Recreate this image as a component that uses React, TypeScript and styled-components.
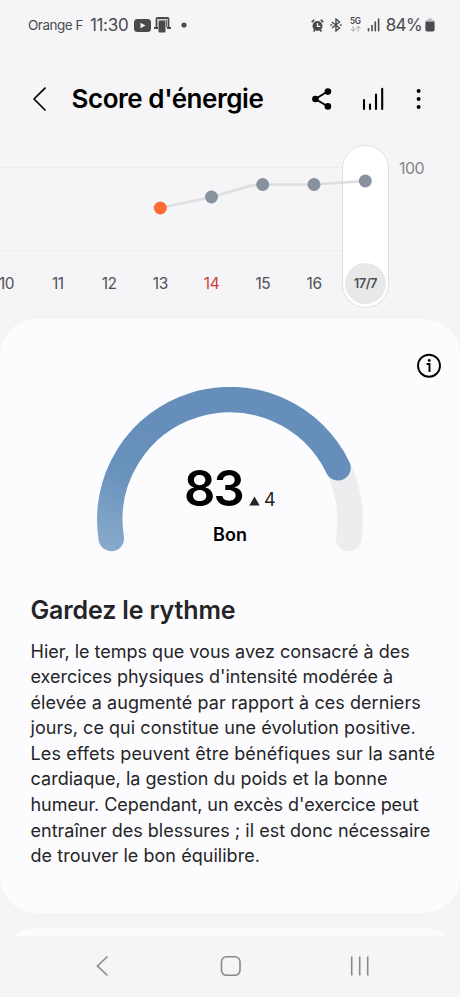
import React from "react";
import styled, { createGlobalStyle } from "styled-components";

const GlobalStyle = createGlobalStyle`
  * { box-sizing: border-box; }
  body { margin: 0; background: #f5f5f7; }
`;

const Screen = styled.div`
  width: 460px;
  height: 997px;
  display: flex;
  flex-direction: column;
  overflow: hidden;
  background: #f5f5f7;
  color: #000;
  font-family: Inter, "Liberation Sans", sans-serif;
`;

const StatusBar = styled.header`
  height: 50px;
  flex: none;
  display: flex;
  justify-content: space-between;
  align-items: center;
  padding: 0 25px 0 28px;
  color: #4b4b4e;
`;

const StatusGroup = styled.div`
  display: flex;
  align-items: center;
  height: 24px;
`;

const StatusText = styled.span<{ $size: number; $spacing: number; $gap?: number }>`
  font-size: ${(p) => p.$size}px;
  letter-spacing: ${(p) => p.$spacing}px;
  line-height: 24px;
  margin-right: ${(p) => p.$gap ?? 0}px;
  white-space: nowrap;
`;

const Icon = styled.svg<{ $gap?: number }>`
  display: block;
  flex: none;
  margin-right: ${(p) => p.$gap ?? 0}px;
`;

const TitleBar = styled.div`
  height: 90px;
  flex: none;
  display: flex;
  align-items: center;
  padding: 7px 38px 0 30px;
`;

const Title = styled.h1`
  margin: 1px auto 0 -0.5px;
  font-size: 26px;
  font-weight: 600;
  line-height: 36px;
  letter-spacing: -0.45px;
  white-space: nowrap;
`;

const ChartSection = styled.section`
  position: relative;
  height: 179px;
  flex: none;
  display: flex;
  overflow: hidden;
`;

const Days = styled.div`
  display: grid;
  grid-template-columns: repeat(8, 51.25px);
  margin-left: -19px;
  height: 100%;
  flex: none;
`;

const Day = styled.div<{ $holiday?: boolean }>`
  display: flex;
  flex-direction: column;
  align-items: center;
  padding-top: 133px;
  font-size: 15.5px;
  line-height: 21px;
  letter-spacing: -0.4px;
  color: ${(p) => (p.$holiday ? "#d23c40" : "#515154")};
`;

const SelectedDay = styled.div`
  width: 47px;
  height: 163px;
  margin: 4.5px auto 0;
  padding: 0 0 3px;
  display: flex;
  align-items: flex-end;
  justify-content: center;
  border: 1px solid #e1e1e4;
  border-radius: 24px;
  background: #fff;
`;

const SelectedLabel = styled.span`
  width: 41px;
  height: 41px;
  flex: none;
  border-radius: 50%;
  background: #e8e8ea;
  color: #515154;
  font-size: 13px;
  font-weight: 600;
  line-height: 41px;
  letter-spacing: -0.5px;
  text-align: center;
`;

const ScaleLabel = styled.span`
  margin: 17px 0 0 8px;
  font-size: 16px;
  line-height: 22px;
  letter-spacing: -0.6px;
  color: #85858a;
`;

const PlotLine = styled.svg`
  position: absolute;
  inset: 0;
  pointer-events: none;
`;

const Content = styled.main`
  height: 617px;
  flex: none;
  display: flex;
  flex-direction: column;
  gap: 14.5px;
  overflow: hidden;
`;

const Card = styled.article`
  height: 594px;
  flex: none;
  display: flex;
  flex-direction: column;
  border-radius: 36px;
  background: #fcfcfe;
`;

const InfoRow = styled.div`
  display: flex;
  justify-content: flex-end;
  padding: 34px 18px 0 0;
`;

const Gauge = styled.div`
  position: relative;
  width: 272px;
  height: 170px;
  margin: 8px auto 0;
`;

const GaugeReadout = styled.div`
  position: absolute;
  inset: 72px 0 0;
  display: flex;
  flex-direction: column;
`;

const ScoreRow = styled.div`
  display: flex;
  align-items: baseline;
  padding-left: 90px;
  height: 60px;
`;

const Score = styled.strong`
  font-size: 49px;
  line-height: 60px;
  font-weight: 600;
  letter-spacing: -1.8px;
  margin-right: 6px;
`;

const Change = styled.span`
  margin-left: 4px;
  font-size: 18px;
  color: #1e1e20;
`;

const Rating = styled.span`
  margin-top: 4px;
  text-align: center;
  font-size: 18px;
  font-weight: 600;
  line-height: 24px;
  letter-spacing: 0;
`;

const Advice = styled.div`
  padding: 35px 0 0 30.5px;
  color: #252528;
`;

const AdviceTitle = styled.h2`
  margin: 0 0 10.5px;
  font-size: 25px;
  line-height: 36px;
  font-weight: 600;
  letter-spacing: -0.15px;
`;

const AdviceText = styled.p`
  margin: 0;
  font-size: 18px;
  line-height: 25.6px;
`;

const Line = styled.span<{ $spacing: number }>`
  display: block;
  white-space: nowrap;
  letter-spacing: ${(p) => p.$spacing}px;
`;

const NavBar = styled.nav`
  flex: 1;
  display: grid;
  grid-template-columns: repeat(3, 129px);
  justify-content: center;
  justify-items: center;
  align-items: center;
  padding-bottom: 1px;
`;

const days = ["10", "11", "12", "13", "14", "15", "16"];

const points = [
  { x: 160.3, y: 68, color: "#ff6b30" },
  { x: 211.5, y: 57, color: "#87929e" },
  { x: 262.7, y: 44.5, color: "#87929e" },
  { x: 314, y: 44.5, color: "#87929e" },
  { x: 365.3, y: 41, color: "#87929e" },
];

const advice: [string, number][] = [
  ["Hier, le temps que vous avez consacré à des", 0],
  ["exercices physiques d'intensité modérée à", 0],
  ["élevée a augmenté par rapport à ces derniers", 0.06],
  ["jours, ce qui constitue une évolution positive.", 0.04],
  ["Les effets peuvent être bénéfiques sur la santé", 0.11],
  ["cardiaque, la gestion du poids et la bonne", 0.04],
  ["humeur. Cependant, un excès d'exercice peut", -0.05],
  ["entraîner des blessures ; il est donc nécessaire", 0],
  ["de trouver le bon équilibre.", 0.04],
];

export default function App() {
  return (
    <>
      <GlobalStyle />
      <Screen>
        <StatusBar>
          <StatusGroup>
            <StatusText $size={13.5} $spacing={-0.5} $gap={7}>Orange F</StatusText>
            <StatusText $size={17} $spacing={-0.3} $gap={6}>11:30</StatusText>
            <Icon $gap={3} width="17" height="13" viewBox="0 0 17 13">
              <rect width="17" height="13" rx="3.5" fill="currentColor" />
              <path d="M6.5 3.7v5.6l5-2.8z" fill="#f5f5f7" />
            </Icon>
            <Icon $gap={10} width="17" height="16" viewBox="0 0 17 16">
              <path d="M2.5 10.500V2q0-1 1-1h10q1 0 1 1v8.500M0 11h4M13 11h4" fill="none" stroke="currentColor" strokeWidth="1.8" />
              <path d="M4.500 3.200h8v7" fill="none" stroke="currentColor" strokeWidth=".8" />
              <rect x="4.500" y="4" width="7" height="11.5" rx="1" fill="currentColor" />
            </Icon>
            <Icon width="6" height="6" viewBox="0 0 6 6"><circle cx="3" cy="3" r="2.6" fill="currentColor" /></Icon>
          </StatusGroup>
          <StatusGroup>
            <Icon $gap={6} width="13" height="13" viewBox="0 0 13 13">
              <circle cx="6.5" cy="7" r="5" fill="currentColor" />
              <path d="M.7 3.2 3.2.8M12.3 3.2 9.8.8M2.5 12.5l1.2-1.3M10.5 12.5 9.3 11.2" stroke="currentColor" strokeWidth="1.7" />
              <path d="M6.5 4v3.3h2.8" stroke="#f5f5f7" strokeWidth="1.3" fill="none" />
            </Icon>
            <Icon $gap={8} width="12" height="14" viewBox="0 0 12 14">
              <path d="m2 4 7.5 6L6 13V1l3.5 3L2 10" fill="none" stroke="currentColor" strokeWidth="1.4" />
              <path d="M.4 7h1.8M9.8 7h1.8" stroke="currentColor" strokeWidth="1.7" />
            </Icon>
            <Icon $gap={6} width="11" height="17" viewBox="0 0 11 17">
              <text x="0" y="7" fontFamily="Inter, sans-serif" fontSize="8.3" fontWeight="600" fill="currentColor" textLength="11">5G</text>
              <path d="M3.2 9v5M1 12l2.2 2.2L5.4 12M8.2 14.500V9.500M6 11.500l2.2-2.2L10.4 11.500" fill="none" stroke="#a9a9ad" />
            </Icon>
            <Icon $gap={6} width="13" height="14" viewBox="0 0 13 14">
              <path d="M1.5 10.8v2M5 7.500v5.3M8.3 4v8.8M11.6 1v11.8" fill="none" stroke="currentColor" strokeWidth="1.6" strokeLinecap="round" />
            </Icon>
            <StatusText $size={17} $spacing={-0.65} $gap={3}>84%</StatusText>
            <Icon width="10" height="14" viewBox="0 0 10 14">
              <path d="M.5 4V2.5L3 1.7V.5h4v1.2l2.5.8V4z" fill="#bababd" />
              <path d="M.4 3.7h9.2v8q0 1.8-1.8 1.8H2.2Q.4 13.5.4 11.7z" fill="currentColor" />
            </Icon>
          </StatusGroup>
        </StatusBar>

        <TitleBar>
          <Icon $gap={22} width="20" height="26" viewBox="0 0 20 26">
            <path d="M15 2.2 4 13l11 11" fill="none" stroke="#000" strokeWidth="1.7" strokeLinecap="round" strokeLinejoin="round" />
          </Icon>
          <Title>Score d'énergie</Title>
          <Icon $gap={30.5} width="20" height="22" viewBox="0 0 20 22">
            <path d="M15.5 3.5 3.4 11l12.1 7.3" fill="none" stroke="#000" strokeWidth="1.9" />
            <circle cx="3.4" cy="11" r="3.3" />
            <circle cx="15.9" cy="3.6" r="3.3" />
            <circle cx="15.9" cy="18.4" r="3.3" />
          </Icon>
          <Icon $gap={32} width="22" height="24" viewBox="0 0 22 24">
            <path d="M2 13v9M8 17.5V22M14 7.5V22M20.2 1.8V22" fill="none" stroke="#000" strokeWidth="2.1" strokeLinecap="round" />
          </Icon>
          <Icon width="6" height="20" viewBox="0 0 6 20">
            <circle cx="2.6" cy="2" r="2" /><circle cx="2.6" cy="10" r="2" /><circle cx="2.6" cy="18" r="2" />
          </Icon>
        </TitleBar>

        <ChartSection>
          <Days>
            {days.map((day) => <Day key={day} $holiday={day === "14"}>{day}</Day>)}
            <SelectedDay><SelectedLabel>17/7</SelectedLabel></SelectedDay>
          </Days>
          <ScaleLabel>100</ScaleLabel>
          <PlotLine width="460" height="179" viewBox="0 0 460 179">
            <path d="M0 27.5H342M0 110.5H342" stroke="#e8e8eb" strokeDasharray="2 2" />
            <path d="M160.3 68 211.5 57 250 46Q256 44.5 263 44.5H314L365.3 41" fill="none" stroke="#dedee0" strokeWidth="2.7" />
            {points.map((p) => <circle key={p.x} cx={p.x} cy={p.y} r="6.5" fill={p.color} />)}
          </PlotLine>
        </ChartSection>

        <Content>
          <Card>
            <InfoRow>
              <Icon width="26" height="26" viewBox="0 0 26 26">
                <circle cx="13" cy="12.7" r="11" fill="none" stroke="#000" strokeWidth="1.9" />
                <circle cx="13.2" cy="7.5" r="1.4" />
                <path d="M10.6 11h2.9v8" fill="none" stroke="#000" strokeWidth="1.9" />
              </Icon>
            </InfoRow>
            <Gauge>
              <Icon width="272" height="170" viewBox="94 386 272 170">
                <defs>
                  <linearGradient id="score" gradientUnits="userSpaceOnUse" x1="160" y1="430" x2="105" y2="550">
                    <stop offset="0" stopColor="#658fba" />
                    <stop offset="0.4" stopColor="#6892bc" />
                    <stop offset="1" stopColor="#89abcc" />
                  </linearGradient>
                </defs>
                <path d="M338 466.7A120 120 0 0 1 348.7 537.5" fill="none" stroke="#ededef" strokeWidth="25.5" strokeLinecap="round" />
                <path d="M111.3 537.5A120 120 0 0 1 338 466.7" fill="none" stroke="url(#score)" strokeWidth="25.5" strokeLinecap="round" />
              </Icon>
              <GaugeReadout>
                <ScoreRow>
                  <Score>83</Score>
                  <Icon width="11" height="10" viewBox="0 0 11 10">
                    <path d="M5.5.5 10.7 9.5H.3z" fill="#252528" />
                  </Icon>
                  <Change>4</Change>
                </ScoreRow>
                <Rating>Bon</Rating>
              </GaugeReadout>
            </Gauge>
            <Advice>
              <AdviceTitle>Gardez le rythme</AdviceTitle>
              <AdviceText>
                {advice.map(([text, spacing]) => <Line key={text} $spacing={spacing}>{text}</Line>)}
              </AdviceText>
            </Advice>
          </Card>
          <Card />
        </Content>

        <NavBar>
          <Icon width="24" height="24" viewBox="0 0 24 24">
            <path d="M18.5 2.5 8.5 12l10 9.5" fill="none" stroke="#89898c" strokeWidth="1.6" />
          </Icon>
          <Icon width="24" height="24" viewBox="0 0 24 24">
            <rect x="3.5" y="2.8" width="18.5" height="18.5" rx="5" fill="none" stroke="#89898c" strokeWidth="1.6" />
          </Icon>
          <Icon width="24" height="24" viewBox="0 0 24 24">
            <path d="M4.7 2.5v19M12.7 2.5v19M20.7 2.5v19" fill="none" stroke="#89898c" strokeWidth="1.6" />
          </Icon>
        </NavBar>
      </Screen>
    </>
  );
}
